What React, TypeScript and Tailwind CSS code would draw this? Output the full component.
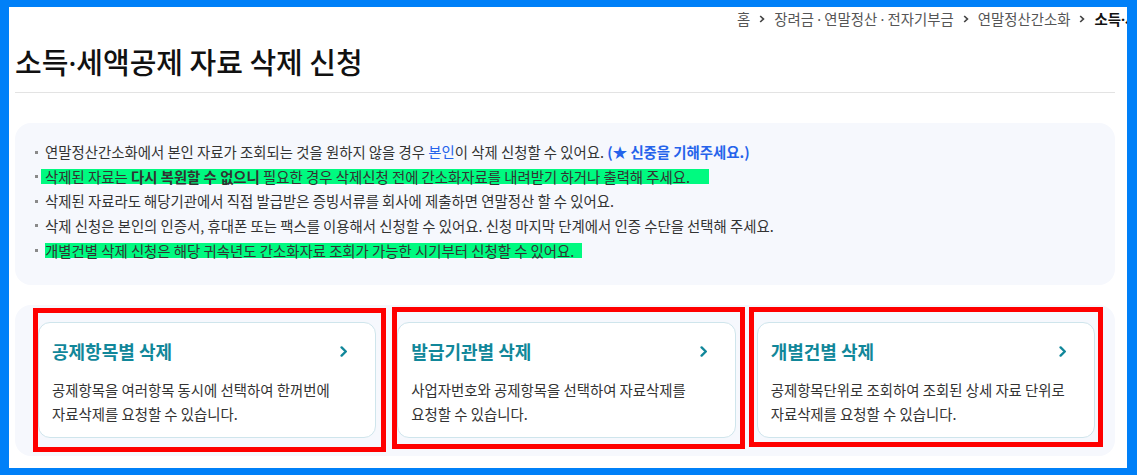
import React from "react";

const FONT = {
  fontFamily: '"Noto Sans CJK KR", "Noto Sans", sans-serif',
};

function Dot() {
  return <span className="font-['Noto_Sans']">·</span>;
}

function Crumb() {
  return (
    <svg width="6" height="8" viewBox="0 0 6 8" className="mx-[9px] shrink-0">
      <path d="M1.2 1 L4.4 4 L1.2 7" fill="none" stroke="#444" strokeWidth="1.7" />
    </svg>
  );
}

function Chevron() {
  return (
    <svg width="8" height="11" viewBox="0 0 8 11" className="shrink-0">
      <path d="M1.6 1.4 L5.8 5.5 L1.6 9.6" fill="none" stroke="#11879a" strokeWidth="2.4" strokeLinecap="round" strokeLinejoin="round" />
    </svg>
  );
}

type CardProps = {
  title: string;
  lines: string[];
  redClass: string;
};

function Card({ title, lines, redClass }: CardProps) {
  return (
    <div className="relative h-[116px] self-start">
      <div className="h-[116px] rounded-[12px] border border-[#cfe5ec] bg-white pl-[13px] pr-[27px] pt-[16px]">
        <div className="flex h-[24px] items-center justify-between">
          <span className="text-[18px] font-bold leading-[24px] text-[#11879a]">{title}</span>
          <Chevron />
        </div>
        <div className="mt-[15px] text-[14.4px] leading-[24px] text-[#333]">
          {lines.map((l, i) => (
            <div key={i} className="whitespace-nowrap">{l}</div>
          ))}
        </div>
      </div>
      <div className={"pointer-events-none absolute border-[5px] border-[#ff0000] " + redClass} />
    </div>
  );
}

export default function App() {
  return (
    <div
      className="h-[475px] w-[1137px] overflow-hidden border-b-[7px] border-l-[9px] border-r-[10px] border-t-[7px] border-[#0080f8] bg-white"
      style={FONT}
    >
      <div className="pl-[6px] pr-[12px]">
        {/* breadcrumb */}
        <div className="mr-[-12px] flex h-[24px] items-center overflow-hidden whitespace-nowrap pl-[722px] text-[14.4px] text-[#555]">
          <span>홈</span>
          <Crumb />
          <span>
            장려금 <Dot /> 연말정산 <Dot /> 전자기부금
          </span>
          <Crumb />
          <span>연말정산간소화</span>
          <Crumb />
          <span className="font-bold text-[#111]">
            소득<Dot />세액공제 자료 삭제 신청
          </span>
        </div>

        {/* title */}
        <div className="mt-[12px] border-b border-[#e3e3e3] pb-[11px]">
          <h1 className="text-[29px] font-medium leading-[36px] text-[#111]">
            소득<Dot />세액공제 자료 삭제 신청
          </h1>
        </div>

        {/* info box */}
        <div className="mt-[30px] h-[162px] rounded-[16px] bg-[#f6f8fd] pl-[20px] pt-[17px]">
          <ul className="text-[14.4px] leading-[24.5px] text-[#333]">
            <li className="flex h-[24.5px] items-center">
              <span className="mr-[7px] h-[3px] w-[3px] shrink-0 bg-[#8a8a8a]" />
              <span className="whitespace-nowrap">
                연말정산간소화에서 본인 자료가 조회되는 것을 원하지 않을 경우{" "}
                <span className="text-[#2563eb]">본인</span>이 삭제 신청할 수 있어요.{" "}
                <span className="font-bold text-[#2563eb]">(★ 신중을 기해주세요.)</span>
              </span>
            </li>
            <li className="flex h-[24.5px] items-center">
              <span className="mr-[7px] h-[3px] w-[3px] shrink-0 bg-[#8a8a8a]" />
              <span className="ml-[-4px] inline-block h-[15px] whitespace-nowrap bg-[#00fa80] pl-[4px] pr-[19px] leading-[15px]">
                삭제된 자료는 <span className="font-bold">다시 복원할 수 없으니</span> 필요한 경우 삭제신청 전에 간소화자료를 내려받기 하거나 출력해 주세요.
              </span>
            </li>
            <li className="flex h-[24.5px] items-center">
              <span className="mr-[7px] h-[3px] w-[3px] shrink-0 bg-[#8a8a8a]" />
              <span className="whitespace-nowrap">
                삭제된 자료라도 해당기관에서 직접 발급받은 증빙서류를 회사에 제출하면 연말정산 할 수 있어요.
              </span>
            </li>
            <li className="flex h-[24.5px] items-center">
              <span className="mr-[7px] h-[3px] w-[3px] shrink-0 bg-[#8a8a8a]" />
              <span className="whitespace-nowrap">
                삭제 신청은 본인의 인증서, 휴대폰 또는 팩스를 이용해서 신청할 수 있어요. 신청 마지막 단계에서 인증 수단을 선택해 주세요.
              </span>
            </li>
            <li className="flex h-[24.5px] items-center">
              <span className="mr-[7px] h-[3px] w-[3px] shrink-0 bg-[#8a8a8a]" />
              <span className="inline-block h-[15px] whitespace-nowrap bg-[#00fa80] pr-[8px] leading-[15px]">
                개별건별 삭제 신청은 해당 귀속년도 간소화자료 조회가 가능한 시기부터 신청할 수 있어요.
              </span>
            </li>
          </ul>
        </div>

        {/* cards */}
        <div className="mt-[20px] grid h-[151px] grid-cols-3 items-start gap-[21px] rounded-[16px] bg-[#f6f8fd] pl-[23px] pr-[20px] pt-[17px]">
          <Card
            title="공제항목별 삭제"
            lines={["공제항목을 여러항목 동시에 선택하여 한꺼번에", "자료삭제를 요청할 수 있습니다."]}
            redClass="-left-[5px] -right-[10px] -top-[14px] -bottom-[14px]"
          />
          <Card
            title="발급기관별 삭제"
            lines={["사업자번호와 공제항목을 선택하여 자료삭제를", "요청할 수 있습니다."]}
            redClass="-left-[5px] -right-[9px] -top-[15px] -bottom-[11px]"
          />
          <Card
            title="개별건별 삭제"
            lines={["공제항목단위로 조회하여 조회된 상세 자료 단위로", "자료삭제를 요청할 수 있습니다."]}
            redClass="-left-[8px] -right-[8px] -top-[15px] -bottom-[9px]"
          />
        </div>
      </div>
    </div>
  );
}
